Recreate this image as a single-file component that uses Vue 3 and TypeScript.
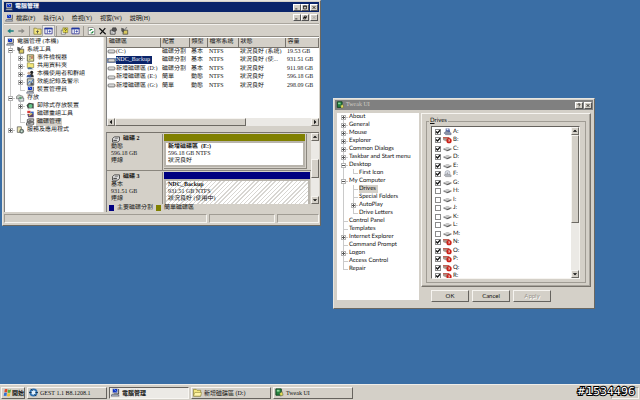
<script setup lang="ts">
import { ref } from 'vue'

type Guide = 'v' | 't' | 'l' | '+' | '-' | ' '

interface TreeRow {
  guides: Guide[]
  label: string
  icon?: string
  selected?: boolean
}

const row = (guides: string, label: string, icon?: string, selected = false): TreeRow => ({
  guides: guides.split('') as Guide[],
  label,
  icon,
  selected,
})

const menus = ['檔案(F)', '執行(A)', '檢視(Y)', '視窗(W)', '說明(H)']

const toolGroups = [
  [{ icon: 'back', name: '上一頁' }, { icon: 'forward', name: '下一頁' }],
  [{ icon: 'folder', name: '上一層' }, { icon: 'pane', name: '樹狀目錄', on: true }],
  [{ icon: 'help', name: '說明' }, { icon: 'pane', name: '設定' }],
  [
    { icon: 'refresh', name: '重新整理' },
    { icon: 'delete', name: '刪除' },
    { icon: 'props', name: '內容' },
    { icon: 'tools', name: '工具' },
  ],
]

const consoleTree: TreeRow[] = [
  row('', '電腦管理 (本機)', 'computer'),
  row('-', '系統工具', 'tools'),
  row('v+', '事件檢視器', 'log'),
  row('v+', '共用資料夾', 'share'),
  row('v+', '本機使用者和群組', 'users'),
  row('v+', '效能記錄及警示', 'perf'),
  row('vl', '裝置管理員', 'computer'),
  row('-', '存放', 'storage'),
  row('v+', '卸除式存放裝置', 'removable'),
  row('vt', '磁碟重組工具', 'defrag'),
  row('vl', '磁碟管理', 'disks', true),
  row('+', '服務及應用程式', 'services'),
]

const columns = ['磁碟區', '配置', '類型', '檔案系統', '狀態', '容量']

const volumes = [
  ['(C:)', '磁碟分割', '基本', 'NTFS', '狀況良好 (系統)', '19.53 GB'],
  ['NDC_Backup', '磁碟分割', '基本', 'NTFS', '狀況良好 (使...', '931.51 GB'],
  ['新增磁碟區 (D:)', '磁碟分割', '基本', 'NTFS', '狀況良好', '911.98 GB'],
  ['新增磁碟區 (E:)', '簡單', '動態', 'NTFS', '狀況良好', '596.18 GB'],
  ['新增磁碟區 (G:)', '簡單', '動態', 'NTFS', '狀況良好', '298.09 GB'],
]
const selectedVolume = ref('NDC_Backup')

const disks = [
  { name: '磁碟 2', type: '動態', size: '596.18 GB', state: '連線', kind: 'simple', volume: '新增磁碟區  (E:)', info: '596.18 GB NTFS', health: '狀況良好' },
  { name: '磁碟 3', type: '基本', size: '931.51 GB', state: '連線', kind: 'primary', volume: 'NDC_Backup', info: '931.51 GB NTFS', health: '狀況良好 (使用中)' },
]

const tweakTree: TreeRow[] = [
  row('+', 'About'),
  row('+', 'General'),
  row('+', 'Mouse'),
  row('+', 'Explorer'),
  row('+', 'Common Dialogs'),
  row('+', 'Taskbar and Start menu'),
  row('-', 'Desktop'),
  row('vl', 'First Icon'),
  row('-', 'My Computer'),
  row('vt', 'Drives', undefined, true),
  row('vt', 'Special Folders'),
  row('v+', 'AutoPlay'),
  row('vl', 'Drive Letters'),
  row('t', 'Control Panel'),
  row('t', 'Templates'),
  row('+', 'Internet Explorer'),
  row('t', 'Command Prompt'),
  row('+', 'Logon'),
  row('t', 'Access Control'),
  row('l', 'Repair'),
]

const driveIcon = (letter: string): string => {
  if (letter === 'A') return 'floppy'
  if (letter === 'F') return 'cdrom'
  if (letter === 'B' || letter >= 'N') return 'missing'
  return 'drive'
}
const drives = ref(
  'ABCDEFGHIJKLMNOPQR'.split('').map((letter) => ({
    letter,
    icon: driveIcon(letter),
    shown: letter < 'H' || letter > 'M',
  })),
)

const tasks = [
  { label: 'GEST 1.1 B8.1208.1', icon: 'gest' },
  { label: '電腦管理', icon: 'computer', active: true },
  { label: '新增磁碟區 (D:)', icon: 'folder' },
  { label: 'Tweak UI', icon: 'tweak' },
]
</script>

<template>
  <svg class="symbols" aria-hidden="true">
    <symbol id="computer" viewBox="0 0 10 10"><path d="M1 0h7v6H1z" fill="#d8d4cc" /><path d="M2 1h5v4H2z" fill="#1030c0" /><path d="M3 1l3 3" stroke="#6db0ff" /><path d="M8 1h1v6H3V6h5z" fill="#444" /><path d="M1 7h7l1 2H0z" fill="#b8c4d0" stroke="#334" stroke-width=".6" /></symbol>
    <symbol id="back" viewBox="0 0 10 10"><path d="M1 5l4-3v2h4v2H5v2z" fill="#188080" /></symbol>
    <symbol id="forward" viewBox="0 0 10 10"><path d="M9 5L5 2v2H1v2h4v2z" fill="#8c8c88" /></symbol>
    <symbol id="folder" viewBox="0 0 10 10"><path d="M.5 1.500h3l1 1h5v6.500h-9z" fill="#f4e680" stroke="#77702c" stroke-width=".8" /><path d="M5 8V5M3.500 6L5 4.500 6.500 6" stroke="#333" fill="none" /></symbol>
    <symbol id="closed" viewBox="0 0 10 10"><path d="M.5 1.500h3l1 1h4v6.500h-8z" fill="#f4e680" stroke="#8a8034" stroke-width=".8" /><path d="M2 5h7.500L8.500 9H.5z" fill="#fff4a8" stroke="#8a8034" stroke-width=".6" /></symbol>
    <symbol id="pane" viewBox="0 0 10 10"><path d="M.5 1.500h9v7h-9z" fill="#fff" stroke="#303090" /><path d="M0 1h10v2H0z" fill="#2038a0" /><path d="M3.500 3v5M5 5.500h3M6.500 4v3" stroke="#3040a0" /></symbol>
    <symbol id="help" viewBox="0 0 10 10"><path d="M1 4h5v5H1z" fill="#fff" stroke="#444" stroke-width=".7" /><path d="M3 1h6v6H3z" fill="#ece04c" stroke="#666020" stroke-width=".6" /><path d="M4.500 3q1.500-2 3 0L6 5M6 6v.8" stroke="#332" fill="none" /></symbol>
    <symbol id="refresh" viewBox="0 0 10 10"><path d="M1 .5h6l2 2v7H1z" fill="#fff" stroke="#555" stroke-width=".7" /><path d="M3 5q0-2 2-2h1M7 5q0 2.500-2 2.500H4" stroke="#128030" fill="none" stroke-width="1.300" /></symbol>
    <symbol id="delete" viewBox="0 0 10 10"><path d="M1 1.500l8 7.500M8.500 1.500L2 9" stroke="#111" stroke-width="1.500" /></symbol>
    <symbol id="props" viewBox="0 0 10 10"><path d="M1 4h6v5H1z" fill="#fff" stroke="#333" /><path d="M4 1h4l1 3-3 2-3-2z" fill="#555" stroke="#222" stroke-width=".6" /><path d="M2 6h3M2 7.500h3" stroke="#333" stroke-width=".6" /></symbol>
    <symbol id="tools" viewBox="0 0 10 10"><path d="M1 1l3 1 3 4-2 3-4-4z" fill="#555" /><path d="M4 4h5v5H3z" fill="#d8c860" stroke="#333" stroke-width=".8" /><path d="M8 0L5 4" stroke="#888" stroke-width="1.400" /></symbol>
    <symbol id="log" viewBox="0 0 10 10"><path d="M1 1h8v8H1z" fill="#ece8a4" stroke="#555533" /><path d="M3 3h3M3 5h4M3 7h2" stroke="#777" /><path d="M7 2v4" stroke="#b22" /></symbol>
    <symbol id="share" viewBox="0 0 10 10"><path d="M1 1h3l1 1h4v5H1z" fill="#f3e779" stroke="#77702c" stroke-width=".7" /><path d="M1 8q3-3 6 0l2 1H2z" fill="#4a7298" /></symbol>
    <symbol id="users" viewBox="0 0 10 10"><circle cx="6.500" cy="3" r="2" fill="#222" /><path d="M3 9q0-4 3-4t3 4z" fill="#333" /><circle cx="3" cy="4" r="1.800" fill="#c8a890" /><path d="M0 9q0-3 3-3t3 3z" fill="#37539a" /></symbol>
    <symbol id="perf" viewBox="0 0 10 10"><path d="M1 1h8v8H1z" fill="#c7d2c9" stroke="#444" /><path d="M2 7l2-3 2 2 2-4" stroke="#225ac0" fill="none" /><path d="M5 6h3v3H5z" fill="#555" /></symbol>
    <symbol id="storage" viewBox="0 0 10 10"><path d="M0 3l3-2 5 2v3H0z" fill="#c8d0c8" stroke="#555" stroke-width=".7" /><path d="M3 5h6v4H3z" fill="#d9e2df" stroke="#445" stroke-width=".7" /><circle cx="5" cy="5" r="1.500" fill="#5a9f72" /></symbol>
    <symbol id="removable" viewBox="0 0 10 10"><path d="M0 4l3-3 6 1v6l-7 1z" fill="#404a44" /><circle cx="5" cy="5" r="2.500" fill="#63c588" /><path d="M2 8h6" stroke="#ddd" /></symbol>
    <symbol id="defrag" viewBox="0 0 10 10"><path d="M1 1h4v3H1z" fill="#d73a35" /><path d="M5 2h4v3H5z" fill="#3161c4" /><path d="M1 5h8v4H2z" fill="#5a466e" /><path d="M3 7l4-3" stroke="#e9cd54" stroke-width="1.500" /></symbol>
    <symbol id="disks" viewBox="0 0 10 10"><path d="M1 2l2-1h6v3L7 5H1zM0 6l2-1h7v3L7 9H0z" fill="#bbb" stroke="#333" stroke-width=".8" /><path d="M2 7h3M3 3h3" stroke="#555" /></symbol>
    <symbol id="services" viewBox="0 0 10 10"><path d="M1 1h5v7H1z" fill="#ece6b2" stroke="#444" stroke-width=".8" /><circle cx="6.500" cy="6.500" r="2.500" fill="#7e9c8e" stroke="#444" stroke-width=".8" /><circle cx="6.500" cy="6.500" r=".8" fill="#fff" /></symbol>
    <symbol id="volume" viewBox="0 0 8 5"><rect x=".5" y="1" width="7" height="3" rx="1" fill="#c7c7c7" stroke="#6b6b6b" stroke-width=".8" /><path d="M1.500 2h5" stroke="#fff" stroke-width=".6" /></symbol>
    <symbol id="disk" viewBox="0 0 10 8"><path d="M1 3l2-2h6v4L7 7H1z" fill="#ddd" stroke="#333" stroke-width=".9" /><path d="M2 5h4" stroke="#222" /><ellipse cx="5.500" cy="2.500" rx="2" ry="1" fill="#999" /></symbol>
    <symbol id="drive" viewBox="0 0 10 8"><path d="M.5 3.500L5 2l4.500 1.500v1L5 6.500.5 4.800z" fill="#8c8c8c" /><path d="M1 3.500L5 2l4 1.500L5 5z" fill="#cdcdcd" /><path d="M4 6l4-1.500" stroke="#444" stroke-width=".8" /></symbol>
    <symbol id="floppy" viewBox="0 0 10 8"><path d="M3 0h4l1 4H3z" fill="#5264a2" /><path d="M4 0h2v2H4z" fill="#dfe5f5" /><path d="M1 5l3-2 5 2v2H3z" fill="#8b93a9" stroke="#586078" stroke-width=".5" /></symbol>
    <symbol id="cdrom" viewBox="0 0 10 8"><circle cx="5" cy="3" r="2.800" fill="#dde1ea" stroke="#8d939f" stroke-width=".6" /><circle cx="5" cy="3" r=".7" fill="#888" /><path d="M1 5l3-1 5 1v2H3z" fill="#b2b6be" stroke="#777" stroke-width=".4" /></symbol>
    <symbol id="missing" viewBox="0 0 10 8"><path d="M0 1h7v3.500L3 5.500 0 4z" fill="#a89c92" /><path d="M0 1h7v1H0z" fill="#c33a30" /><circle cx="6.700" cy="4.800" r="2.900" fill="#cb2118" /><path d="M5.900 4q.8-1.200 1.600 0l-.8 1v1" stroke="#fff" stroke-width=".8" fill="none" /></symbol>
    <symbol id="tweak" viewBox="0 0 10 10"><path d="M1 1h6v7H1z" fill="#278341" stroke="#0b3d1a" /><path d="M2 2h3v2H2z" fill="#8fd89b" /><path d="M5 6l3-2 1 4-3 1z" fill="#e3df58" stroke="#444" stroke-width=".5" /></symbol>
    <symbol id="gest" viewBox="0 0 10 10"><circle cx="5" cy="5" r="4.500" fill="#2f6fae" /><circle cx="5" cy="5" r="2.500" fill="#e3f2ff" /><path d="M0 5h3M7 5h3M2 1l2 2M6 7l2 2" stroke="#123452" /></symbol>
    <symbol id="flag" viewBox="0 0 10 10"><path d="M2 1.500q1.500-1 3 0L4.500 5Q3 4 1.500 5z" fill="#e0492c" /><path d="M5.500 1.700q1.500 1 3.500 0L8.300 5q-1.800 1-3.300 0z" fill="#58ab3c" /><path d="M1.300 5.500q1.500-1 3 0L3.800 9Q2.300 8 .8 9z" fill="#326ed0" /><path d="M5 5.700q1.500 1 3.200 0L7.600 9q-1.600 1-3.200 0z" fill="#f0c22f" /></symbol>
    <symbol id="min" viewBox="0 0 7 7"><path d="M1 5h3v1H1z" fill="#000" /></symbol>
    <symbol id="max" viewBox="0 0 7 7"><path d="M1.500 1.500h4v4h-4z" fill="none" stroke="#000" /><path d="M1 1h5v1H1z" /></symbol>
    <symbol id="restore" viewBox="0 0 7 7"><path d="M2.500 1.500h3v2h-3zM1.500 3.500h3v2h-3z" fill="none" stroke="#000" /></symbol>
    <symbol id="close" viewBox="0 0 7 7"><path d="M1.500 1.500l4 4M5.500 1.500l-4 4" stroke="currentColor" /></symbol>
    <symbol id="question" viewBox="0 0 7 7"><path d="M2 2.500q0-1.500 1.500-1.500T5 2.300L3.500 3.600v.9M3.500 5.200v1" stroke="#000" fill="none" /></symbol>
    <symbol id="arrow" viewBox="0 0 7 7"><path d="M1 4.500L3.500 2 6 4.500z" fill="#000" /></symbol>
    <symbol id="tick" viewBox="0 0 6 6"><path d="M1 2.500L2.500 4 5 1.200" stroke="#111" stroke-width="1.300" fill="none" /></symbol>
  </svg>

  <main class="desktop">
    <section class="window manager" aria-label="電腦管理">
      <header class="title">
        <svg class="icon"><use href="#computer" /></svg>
        <h1>電腦管理</h1>
        <button class="cap" aria-label="最小化"><svg><use href="#min" /></svg></button>
        <button class="cap" aria-label="最大化"><svg><use href="#max" /></svg></button>
        <button class="cap last" aria-label="關閉"><svg><use href="#close" /></svg></button>
      </header>
      <nav class="menubar">
        <svg class="icon"><use href="#computer" /></svg>
        <button v-for="m in menus" :key="m" class="menu">{{ m }}</button>
        <span class="spring"></span>
        <button class="cap" aria-label="最小化子視窗"><svg><use href="#min" /></svg></button>
        <button class="cap" aria-label="還原子視窗"><svg><use href="#restore" /></svg></button>
        <button class="cap last" aria-label="關閉子視窗" disabled><svg><use href="#close" /></svg></button>
      </nav>
      <div class="toolbar">
        <div v-for="(group, i) in toolGroups" :key="i" class="group">
          <button v-for="t in group" :key="t.name" class="tool" :class="{ on: 'on' in t }" :aria-label="t.name">
            <svg><use :href="'#' + t.icon" /></svg>
          </button>
        </div>
      </div>

      <div class="panes">
        <ul class="tree console">
          <li v-for="r in consoleTree" :key="r.label">
            <span v-for="(g, i) in r.guides" :key="i" class="guide" :class="{ v: g !== ' ' && g !== 'l', l: g === 'l', h: g !== 'v' }">
              <button v-if="g === '+' || g === '-'" class="expander" :class="{ plus: g === '+' }" :aria-label="r.label"></button>
            </span>
            <svg class="icon"><use :href="'#' + r.icon" /></svg>
            <span class="label" :class="{ selected: r.selected }">{{ r.label }}</span>
          </li>
        </ul>

        <div class="detail">
          <div class="volumes">
            <table>
              <colgroup><col class="c1" /><col class="c2" /><col class="c3" /><col class="c4" /><col class="c5" /><col /></colgroup>
              <thead>
                <tr><th v-for="c in columns" :key="c" scope="col">{{ c }}</th></tr>
              </thead>
              <tbody>
                <tr v-for="v in volumes" :key="v[0]" @click="selectedVolume = v[0]">
                  <td v-for="(cell, i) in v" :key="i">
                    <span v-if="i === 0" class="name" :class="{ selected: cell === selectedVolume }">
                      <svg><use href="#volume" /></svg><span>{{ cell }}</span>
                    </span>
                    <template v-else>{{ cell }}</template>
                  </td>
                </tr>
              </tbody>
            </table>
            <div class="hscroll">
              <button class="arrow left" aria-label="向左捲動"><svg><use href="#arrow" /></svg></button>
              <span class="thumb"></span>
              <button class="arrow right" aria-label="向右捲動"><svg><use href="#arrow" /></svg></button>
            </div>
          </div>

          <div class="graph">
            <div class="graph-body">
              <div class="disk-list">
                <article v-for="d in disks" :key="d.name" class="disk" :class="d.kind">
                  <div class="disk-head">
                    <h2><svg><use href="#disk" /></svg>{{ d.name }}</h2>
                    <p>{{ d.type }}</p>
                    <p>{{ d.size }}</p>
                    <p>{{ d.state }}</p>
                  </div>
                  <div class="partition">
                    <div class="band"></div>
                    <div class="part-body">
                      <h3>{{ d.volume }}</h3>
                      <p>{{ d.info }}</p>
                      <p>{{ d.health }}</p>
                    </div>
                  </div>
                </article>
              </div>
              <div class="vscroll graph-scroll">
                <button class="arrow" aria-label="向上捲動"><svg><use href="#arrow" /></svg></button>
                <span class="thumb"></span>
                <button class="arrow down" aria-label="向下捲動"><svg><use href="#arrow" /></svg></button>
              </div>
            </div>
            <div class="legend">
              <span class="swatch primary"></span>主要磁碟分割
              <span class="swatch simple"></span>簡單磁碟區
            </div>
          </div>
        </div>
      </div>
      <footer class="status"><span></span><span></span><span></span></footer>
    </section>

    <section class="window tweak" aria-label="Tweak UI">
      <header class="title inactive">
        <svg class="icon"><use href="#tweak" /></svg>
        <h1>Tweak UI</h1>
        <button class="cap" aria-label="Help"><svg><use href="#question" /></svg></button>
        <button class="cap last" aria-label="Close"><svg><use href="#close" /></svg></button>
      </header>
      <div class="tweak-body">
        <ul class="tree">
          <li v-for="(r, n) in tweakTree" :key="r.label">
            <span v-for="(g, i) in r.guides" :key="i" class="guide" :class="{ v: g !== ' ' && g !== 'l', l: g === 'l', h: g !== 'v', first: n === 0 }">
              <button v-if="g === '+' || g === '-'" class="expander" :class="{ plus: g === '+' }" :aria-label="r.label"></button>
            </span>
            <span class="label" :class="{ selected: r.selected }">{{ r.label }}</span>
          </li>
        </ul>
        <div class="side">
          <div class="page">
            <fieldset>
              <legend><u>D</u>rives</legend>
              <div class="drives">
                <div class="drive-list">
                  <label v-for="d in drives" :key="d.letter">
                    <span class="check">
                      <input v-model="d.shown" type="checkbox" />
                      <svg v-if="d.shown" class="tick"><use href="#tick" /></svg>
                    </span>
                    <svg class="drive-icon"><use :href="'#' + d.icon" /></svg>
                    <span>{{ d.letter }}:</span>
                  </label>
                </div>
                <div class="vscroll drive-scroll">
                  <button class="arrow" aria-label="Scroll up"><svg><use href="#arrow" /></svg></button>
                  <span class="thumb"></span>
                  <button class="arrow down" aria-label="Scroll down"><svg><use href="#arrow" /></svg></button>
                </div>
              </div>
            </fieldset>
          </div>
          <div class="actions">
            <button>OK</button>
            <button>Cancel</button>
            <button disabled>Apply</button>
          </div>
        </div>
      </div>
    </section>

    <footer class="taskbar">
      <button class="start"><svg><use href="#flag" /></svg><b>開始</b></button>
      <button v-for="t in tasks" :key="t.label" class="task" :class="{ active: t.active }">
        <svg><use :href="'#' + (t.icon === 'folder' ? 'closed' : t.icon)" /></svg><span>{{ t.label }}</span>
      </button>
      <div class="tray"></div>
    </footer>
    <div class="stamp">#1534496</div>
  </main>
</template>

<style>
body {
  margin: 0;
  overflow: hidden;
}
</style>

<style scoped>
* {
  box-sizing: border-box;
}
.symbols {
  position: absolute;
  width: 0;
  height: 0;
}
.desktop {
  position: relative;
  display: flex;
  flex-direction: column;
  justify-content: flex-end;
  height: 100vh;
  background: #3a6ea5;
  color: #111;
  font: 6px/8px 'Liberation Serif', 'Noto Sans CJK TC', serif;
  text-rendering: geometricPrecision;
  white-space: nowrap;
}
h1, h2, h3, p, ul {
  margin: 0;
  padding: 0;
  font: inherit;
}
svg {
  display: block;
  flex: none;
}
button {
  padding: 0;
  border: 0;
  background: none;
  color: inherit;
  font: inherit;
}
.icon {
  width: 9px;
  height: 8px;
}
.window {
  position: absolute;
  display: flex;
  flex-direction: column;
  padding: 1px;
  background: #d4d0c8;
  border: 1px solid;
  border-color: #e8e6e0 #6a6862 #6a6862 #e8e6e0;
}
.manager {
  left: 2px;
  top: 0;
  width: 319px;
}
.tweak {
  left: 333px;
  top: 98px;
  width: 262px;
  font-family: Lato, sans-serif;
}
.title {
  display: flex;
  align-items: center;
  height: 10px;
  padding: 0 1px;
  background: #0a246a;
  color: #fff;
}
.title.inactive {
  background: #808080;
  color: #d4d0c8;
}
.title h1 {
  flex: 1;
  margin-left: 1px;
  font-family: 'Liberation Serif', 'Noto Sans CJK TC', serif;
  font-weight: bold;
}
.title.inactive h1 {
  font-weight: normal;
}
.cap {
  width: 8px;
  height: 7px;
  background: #d4d0c8;
  border: 1px solid;
  border-color: #fff #555 #555 #fff;
  color: #000;
}
.cap svg {
  width: 6px;
  height: 5px;
}
.cap.last {
  margin-left: 1px;
}
.cap:disabled {
  color: #999;
}
.menubar {
  display: flex;
  align-items: center;
  height: 12px;
  padding: 0 1px;
  border-bottom: 1px solid #aaa69e;
}
.menu {
  margin-left: 2px;
  margin-right: 6px;
}
.spring {
  flex: 1;
}
.toolbar {
  display: flex;
  align-items: center;
  height: 13px;
  border-top: 1px solid #f2f0ec;
  border-bottom: 1px solid #908c84;
}
.group {
  display: flex;
  padding: 0 1px;
}
.group + .group {
  margin-left: 1px;
  border-left: 1px solid #a09c94;
  padding-left: 2px;
}
.tool {
  width: 11px;
  height: 10px;
  padding: 1px;
}
.tool svg {
  width: 9px;
  height: 8px;
}
.tool.on {
  background: #ebe9e4;
  outline: 1px solid #aaa;
}
.panes {
  display: flex;
  gap: 2px;
}
.tree {
  list-style: none;
  background: #fff;
}
.console {
  width: 100px;
  padding: 1px 1px 0;
  border-left: 1px solid #808080;
  border-right: 1px solid #f0eeea;
}
.tree li {
  display: flex;
  align-items: center;
  height: 8px;
}
.console .label {
  margin-left: 1px;
  padding: 0 1px;
}
.label {
  line-height: 8px;
}
.label.selected {
  background: #d4d0c8;
}
.guide {
  position: relative;
  width: 10px;
  height: 8px;
  flex: none;
}
.guide.v::before,
.guide.l::before {
  content: '';
  position: absolute;
  left: 4px;
  top: 0;
  height: 8px;
  border-left: 1px solid #cacaca;
}
.guide.l::before {
  height: 4px;
}
.guide.first::before {
  top: 4px;
  height: 4px;
}
.guide.h::after {
  content: '';
  position: absolute;
  left: 4px;
  right: 1px;
  top: 4px;
  border-top: 1px solid #cacaca;
}
.console li:last-child .guide::before {
  height: 4px;
}
.expander {
  position: absolute;
  z-index: 1;
  left: 2px;
  top: 2px;
  width: 5px;
  height: 5px;
  border: 1px solid #b4b4b4;
  background: linear-gradient(#555, #555) center / 3px 1px no-repeat #fff;
}
.expander.plus {
  background: linear-gradient(#555, #555) center / 3px 1px no-repeat,
    linear-gradient(#555, #555) center / 1px 3px no-repeat #fff;
}
.detail {
  flex: 1;
  display: flex;
  flex-direction: column;
  min-width: 0;
  gap: 6px;
}
.volumes {
  display: flex;
  flex-direction: column;
  justify-content: space-between;
  height: 89px;
  padding-top: 1px;
  background: #fff;
  border-left: 1px solid #808080;
}
table {
  width: 100%;
  table-layout: fixed;
  border-collapse: collapse;
}
.c1 { width: 53px; }
.c2 { width: 29px; }
.c3 { width: 18px; }
.c4 { width: 31px; }
.c5 { width: 47px; }
th {
  height: 9px;
  padding: 0 0 0 2px;
  background: #d4d0c8;
  border-right: 1px solid #77736c;
  border-bottom: 1px solid #77736c;
  text-align: left;
  font-weight: normal;
  line-height: 8px;
}
td {
  height: 8px;
  padding: 0 0 0 2px;
  overflow: visible;
  line-height: 8px;
}
tbody tr:nth-child(odd) td {
  height: 9px;
}
td:first-child {
  padding-left: 0;
}
.name {
  display: flex;
  align-items: center;
  height: 8px;
}
.name svg {
  width: 9px;
  height: 5px;
}
.name.selected span {
  padding-right: 2px;
  background: #0a246a;
  color: #fff;
}
.name.selected svg {
  background: #7d92c0;
}
.hscroll {
  display: flex;
  height: 8px;
  background: #ebe9e5;
}
.vscroll {
  display: flex;
  flex-direction: column;
  width: 8px;
  flex: none;
  background: #ebe9e5;
}
.arrow,
.thumb {
  display: block;
  flex: none;
  width: 8px;
  height: 8px;
  background: #d4d0c8;
  border: 1px solid;
  border-color: #f6f4f0 #6c6963 #6c6963 #f6f4f0;
}
.arrow svg {
  width: 6px;
  height: 6px;
}
.left svg { transform: rotate(-90deg); }
.right svg { transform: rotate(90deg); }
.down svg { transform: rotate(180deg); }
.right {
  margin-left: auto;
}
.down {
  margin-top: auto;
}
.hscroll .thumb {
  width: 62%;
}
.graph {
  display: flex;
  flex-direction: column;
  height: 80px;
  border-left: 1px solid #808080;
  border-top: 1px solid #77736c;
}
.graph-body {
  display: flex;
  height: 71px;
}
.disk-list {
  flex: 1;
  overflow: hidden;
}
.disk {
  display: flex;
  gap: 1px;
  height: 38px;
  padding-top: 1px;
  border-bottom: 1px solid #8a867e;
}
.disk-head {
  width: 56px;
  padding: 1px 4px 0;
  border-right: 1px solid #8a867e;
  line-height: 8px;
}
.disk-head h2 {
  display: flex;
  align-items: center;
  gap: 2px;
  height: 8px;
  font-weight: bold;
}
.disk-head svg {
  width: 10px;
  height: 7px;
}
.disk-head p,
.part-body p {
  height: 7px;
  line-height: 8px;
}
.partition {
  flex: 1;
  display: flex;
  flex-direction: column;
  margin: 0 1px 1px 0;
}
.simple .partition {
  margin-right: 4px;
  border-right: 1px solid #8a867e;
  border-bottom: 1px solid #8a867e;
  padding: 0 1px 1px 0;
}
.band {
  height: 7px;
  background: #808000;
}
.primary .band {
  background: #000080;
}
.part-body {
  flex: 1;
  padding: 0 2px;
  background: #fff;
  border: 2px solid #b8b4ac;
}
.part-body h3 {
  height: 7px;
  font-weight: bold;
  line-height: 8px;
  white-space: pre;
}
.primary .part-body {
  background: repeating-linear-gradient(135deg, #fff 0 2px, #d8d6d2 2px 3px);
}
.legend {
  display: flex;
  align-items: center;
  gap: 3px;
  height: 8px;
  padding-left: 2px;
}
.swatch {
  width: 5px;
  height: 6px;
  background: #000080;
}
.swatch.simple {
  background: #808000;
}
.status {
  display: flex;
  gap: 2px;
  height: 12px;
  padding: 2px 0 1px;
}
.status span {
  border: 1px solid;
  border-color: #a09c94 #f6f4f0 #f6f4f0 #a09c94;
}
.status span:nth-child(1) { flex: 206; }
.status span:nth-child(2) { flex: 66; }
.status span:nth-child(3) { flex: 41; }

.tweak-body {
  display: flex;
  gap: 2px;
  padding: 3px 2px 5px;
}
.tweak .tree {
  width: 82px;
  height: 187px;
  padding-left: 2px;
}
.tweak .label {
  padding-right: 2px;
}
.side {
  flex: 1;
}
.page {
  padding: 4px 4px 3px;
  border: 1px solid;
  border-color: #f6f4f0 #77736c #77736c #f6f4f0;
  box-shadow: inset -1px -1px #a8a49c;
}
fieldset {
  min-width: 0;
  margin: 0;
  padding: 2px 5px 3px 4px;
  border: 1px solid #a09c94;
}
legend {
  height: 6px;
  padding: 0 1px;
  margin-left: -2px;
  line-height: 6px;
}
.drives {
  display: flex;
  height: 153px;
  background: #fff;
  border: 1px solid;
  border-color: #66635e #f6f4f0 #f6f4f0 #66635e;
}
.drive-list {
  flex: 1;
  overflow: hidden;
}
.drive-list label {
  display: flex;
  align-items: center;
  height: 8px;
  padding-left: 3px;
}
.drive-list label:nth-child(odd) {
  height: 9px;
}
.drive-icon {
  width: 9px;
  height: 8px;
  margin: 0 1px 0 2px;
}
.check {
  display: grid;
}
input {
  grid-area: 1 / 1;
  appearance: none;
  width: 6px;
  height: 6px;
  margin: 0;
  border: 1px solid #8b8b8b;
  background: #fff;
}
.tick {
  grid-area: 1 / 1;
  z-index: 1;
  width: 6px;
  height: 6px;
  pointer-events: none;
}
.vscroll.drive-scroll .thumb {
  height: 88px;
}
.vscroll.graph-scroll .thumb {
  height: 19px;
  margin-top: 18px;
}
.actions {
  display: flex;
  gap: 3px;
  padding: 3px 0 0 10px;
}
.actions button {
  width: 38px;
  height: 12px;
  border: 1px solid;
  border-color: #f6f4f0 #66635e #66635e #f6f4f0;
}
.actions button:disabled {
  color: #98948c;
  text-shadow: 1px 1px #fff;
}
.taskbar {
  display: flex;
  align-items: center;
  gap: 2px;
  height: 16px;
  padding: 0 1px;
  background: #d4d0c8;
  border-top: 1px solid #efede9;
}
.start,
.task {
  display: flex;
  align-items: center;
  gap: 2px;
  height: 12px;
  padding: 0 1px;
  border: 1px solid;
  border-color: #f8f6f2 #66635e #66635e #f8f6f2;
}
.start {
  width: 24px;
  gap: 0;
}
.start svg,
.task svg {
  width: 9px;
  height: 9px;
}
.task {
  width: 80px;
}
.task.active {
  background: #eceae6;
  border-color: #66635e #f8f6f2 #f8f6f2 #66635e;
  font-weight: bold;
}
.tray {
  margin-left: auto;
  width: 28px;
  height: 12px;
  border: 1px solid;
  border-color: #a09c94 #f6f4f0 #f6f4f0 #a09c94;
}
.stamp {
  position: absolute;
  right: 5px;
  bottom: 2px;
  color: #fff;
  font: 11px/12px 'DejaVu Sans', sans-serif;
  -webkit-text-stroke: 2px #000;
  paint-order: stroke fill;
}
</style>
